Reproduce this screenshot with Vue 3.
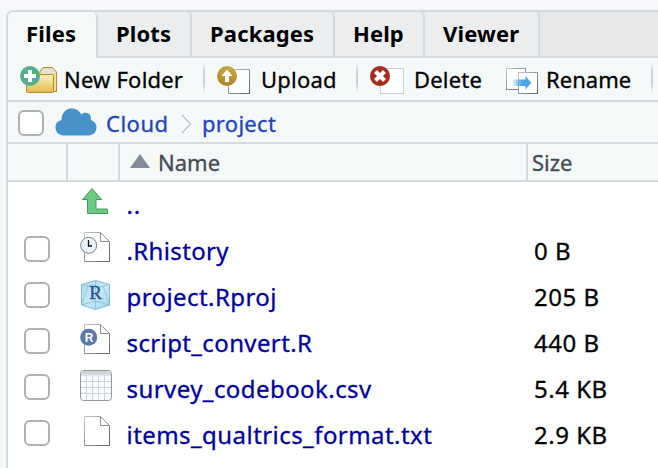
<script setup>
const tabs = [
  { name: 'Files', width: 90, ls: 0.15 },
  { name: 'Plots', width: 94, ls: 0.1 },
  { name: 'Packages', width: 143, ls: 0.15 },
  { name: 'Help', width: 90, ls: 0.1 },
  { name: 'Viewer', width: 115, ls: 0.15 },
]
const actions = [
  { name: 'New Folder', icon: 'folder', ls: 0.2 },
  { name: 'Upload', icon: 'upload', ls: 0.2 },
  { name: 'Delete', icon: 'delete', ls: 0.2 },
  { name: 'Rename', icon: 'rename', ls: 0.05 },
]
const files = [
  { name: '..', icon: 'up', size: '', ls: 0.8 },
  { name: '.Rhistory', icon: 'history', size: '0 B', ls: 0.35 },
  { name: 'project.Rproj', icon: 'project', size: '205 B', ls: 0.42 },
  { name: 'script_convert.R', icon: 'script', size: '440 B', ls: 0.38 },
  { name: 'survey_codebook.csv', icon: 'table', size: '5.4 KB', ls: 0.43 },
  { name: 'items_qualtrics_format.txt', icon: 'text', size: '2.9 KB', ls: 0.44 },
]
</script>

<template>
  <div class="page">
    <svg class="defs" width="0" height="0">
      <defs>
        <linearGradient id="gold" x2="0" y2="1"><stop stop-color="#c9a83f" /><stop offset="1" stop-color="#ad8528" /></linearGradient>
        <linearGradient id="fold" x2="0" y2="1"><stop stop-color="#fbf3b4" /><stop offset="1" stop-color="#e3b94f" /></linearGradient>
        <linearGradient id="edge" x2="1" y2="1"><stop stop-color="#c4c5c9" /><stop offset="1" stop-color="#62646c" /></linearGradient>
        <linearGradient id="blue"><stop stop-color="#4ba6e8" stop-opacity="0.1" /><stop offset=".5" stop-color="#4ba6e8" /></linearGradient>
        <linearGradient id="ice" x2="1" y2="1"><stop stop-color="#a9dcf0" /><stop offset=".5" stop-color="#c6e8f6" /><stop offset="1" stop-color="#a5d6ec" /></linearGradient>
      </defs>
    </svg>
    <div class="panel">
      <div class="tabs">
        <div v-for="(t, i) in tabs" :key="t.name" class="tab" :class="{ active: i === 0 }" :style="{ width: t.width + 'px' }">
          <span :style="{ letterSpacing: t.ls + 'px' }">{{ t.name }}</span>
        </div>
      </div>

      <div class="toolbar">
        <div v-for="a in actions" :key="a.name" class="action" :class="a.icon">
          <svg class="tool-icon" width="38" height="32" viewBox="0 0 38 32">
            <template v-if="a.icon === 'folder'">
              <path d="M20 10V7l3-3.5h9.5L36.5 8v19.5H30" fill="#f3dc98" stroke="#b28d30" />
              <path d="M20 10 23.5 4.5h8.7L34 7v3z" fill="#e1e0dc" />
              <rect x="6.5" y="10.5" width="27" height="18" rx="1" fill="url(#fold)" stroke="#b28d30" />
              <circle cx="10" cy="12" r="10" fill="#55ae8b" />
              <path d="M10 6v12M4 12h12" stroke="#fff" stroke-width="4" />
            </template>
            <template v-else-if="a.icon === 'upload'">
              <rect x="11.5" y="5.5" width="21" height="24" fill="#fff" stroke="url(#edge)" />
              <circle cx="10" cy="12" r="10" fill="url(#gold)" />
              <path d="M10 5.5 15.5 12H12v6H8v-6H4.5z" fill="#fff" />
            </template>
            <template v-else-if="a.icon === 'delete'">
              <rect x="10.5" y="4.5" width="23" height="25" fill="#fff" stroke="#cbd0dc" />
              <circle cx="10" cy="12.6" r="10" fill="#8f98a3" opacity=".35" />
              <circle cx="10" cy="12" r="10" fill="#a52c1f" />
              <path d="m5.5 7.5 9 9m0-9-9 9" stroke="#fff" stroke-width="4.2" />
            </template>
            <template v-else>
              <rect x="1.5" y="4.5" width="19" height="21" fill="#fff" stroke="url(#edge)" />
              <rect x="13.5" y="8.5" width="19" height="21" fill="#fff" stroke="url(#edge)" />
              <path d="M7.5 15.5h13v-3.5l5.8 6.7-5.8 6.8v-3.5h-13z" fill="url(#blue)" />
            </template>
          </svg>
          <span :style="{ letterSpacing: a.ls + 'px' }">{{ a.name }}</span>
          <i class="sep"></i>
        </div>
      </div>

      <div class="path">
        <i class="check"></i>
        <svg class="cloud" width="42" height="28" viewBox="0 0 42 28">
          <path d="M9 27.5C3.500 27.500.500 23.800.500 19.500c0-4 2.300-6.600 6-7.400C6.400 5.200 10.800.500 16.500.500c5 0 8.500 2.700 9.900 6.300 1-1.500 2.500-2 4.100-2 4 0 6.300 3.300 5.300 7.200 3.600 1.100 5.700 4 5.700 7.600 0 4.500-3.300 7.900-8 7.900z" fill="#4793c9" />
        </svg>
        <span class="crumb root">Cloud</span>
        <svg class="chev" width="14" height="22" viewBox="0 0 14 22"><path d="m4 2.500 8.500 8.500L4 19.500" fill="none" stroke="#fff" stroke-width="2" /><path d="m2 2 8.500 9L2 20" fill="none" stroke="#c3c8d0" stroke-width="1.700" /></svg>
        <span class="crumb leaf">project</span>
      </div>

      <div class="head">
        <div></div>
        <div></div>
        <div class="name-head">
          <svg width="20" height="14" viewBox="0 0 20 14"><path d="M10 0 20 14H0z" fill="#848b99" /></svg>
          <span>Name</span>
        </div>
        <div class="size-head">Size</div>
      </div>

      <div class="rows">
        <div v-for="f in files" :key="f.name" class="row">
          <div class="c-check"><i v-if="f.icon !== 'up'" class="check"></i></div>
          <svg class="file-icon" width="36" height="36" viewBox="0 0 36 36">
            <path v-if="f.icon === 'up'" d="M13 3.500 22.700 14.500H17v9.500h11.500v4.500H8.500v-14h-5z" fill="#6cc882" stroke="#439b58" />
            <template v-else-if="f.icon === 'project'">
              <path d="M16.500 3.500 30.500 7.500v20.500l-14 4.500-14-4.500v-20.500z" fill="url(#ice)" stroke="#7fbdd3" />
              <path d="M2.500 7.500 16.500 11l14-3.500M16.500 3.500V32M2.500 28l14-4 14 4M2.500 28 9 9M30.500 28 24 9" fill="none" stroke="#83c0d4" stroke-width=".8" />
              <text x="16.500" y="22" text-anchor="middle" class="serif-r">R</text>
            </template>
            <template v-else-if="f.icon === 'table'">
              <rect x="1.500" y="1.500" width="31" height="30" rx="3" fill="#fafcfe" stroke="#8f98a4" />
              <path d="M2 5.500V4q0-2 2.500-2h25Q32 2 32 4v1.500z" fill="#cfd4d9" />
              <path d="M2 12.500h30M2 18.500h30M2 24.500h30M7.500 6v25M13.500 6v25M19.500 6v25M25.500 6v25M2 6h30" fill="none" stroke="#ccd5df" />
            </template>
            <template v-else>
              <path d="M5.500 1.500h16l9 9v20h-25z" fill="#fff" stroke="url(#edge)" />
              <path d="M21.500 1.500v9h9" fill="none" stroke="#8d8e93" />
              <template v-if="f.icon === 'history'">
                <circle cx="9.700" cy="14.300" r="8" fill="#edf3fa" stroke="#7b818b" />
                <path d="M9.500 9v6H13" fill="none" stroke="#111" stroke-width="1.300" />
              </template>
              <template v-if="f.icon === 'script'">
                <circle cx="9.700" cy="14.300" r="8.500" fill="#5878a8" />
                <text x="10" y="18.700" text-anchor="middle" class="sans-r">R</text>
              </template>
            </template>
          </svg>
          <span class="file-name" :style="{ letterSpacing: f.ls + 'px' }">{{ f.name }}</span>
          <span class="file-size">{{ f.size }}</span>
        </div>
      </div>
    </div>
  </div>
</template>

<style>
body { margin: 0; overflow: hidden; }
</style>

<style scoped>
* { box-sizing: border-box; }
.page { width: 658px; height: 468px; padding: 10px 0 0 6px; background: #f5f7fa; overflow: hidden; font: 22px "Noto Sans", sans-serif; white-space: nowrap; color: #000; }
.page span, .size-head { -webkit-text-stroke: 0.3px currentColor; }
.page .tab span { -webkit-text-stroke: 0; }
.defs { display: block; position: absolute; }
.panel { height: 458px; border: 2px solid #d6dadc; border-right: 0; border-bottom: 0; border-top-left-radius: 7px; background: #f4f8f9; overflow: hidden; }
.tabs { display: flex; height: 46px; background: linear-gradient(#d6dadc, #d6dadc) bottom / 100% 2px no-repeat #e6e8ea; }
.tab { flex: none; height: 46px; padding-left: 18px; line-height: 42px; font-weight: 700; border: solid #d6dadc; border-width: 0 2px 2px 0; border-top-right-radius: 5px; background: #ecedef; }
.tab.active { background: #f4f8f9; border-bottom: 0; }
.toolbar { display: flex; height: 44px; border-bottom: 2px solid #d6dadc; }
.action { flex: none; display: flex; align-items: flex-start; line-height: 43px; }
.action.folder { width: 197px; padding-left: 12px; }
.action.upload { width: 153px; padding-left: 12px; }
.action.delete { width: 145px; padding-left: 12px; }
.action.rename { width: 150px; padding-left: 2px; }
.tool-icon { flex: none; margin-top: 6px; }
.action span { margin-left: 6px; }
.action.rename span { margin-left: 3px; }
.sep { margin: 5px 0 0 auto; width: 2px; height: 30px; background: linear-gradient(transparent, #cdd1d3 30%, #cdd1d3 70%, transparent); }
.action.delete .sep { display: none; }
.path { display: flex; align-items: center; height: 42px; padding: 2px 0 0 10px; border-bottom: 2px solid #d6dadc; color: #1f45b8; }
.check { display: block; flex: none; width: 26px; height: 26px; border: 2px solid #b0b0b0; border-radius: 6px; background: #fff; }
.cloud { margin: -2px 0 0 11px; }
.crumb { line-height: 38px; }
.root { width: 72px; margin-left: 9px; letter-spacing: 0.5px; }
.leaf { letter-spacing: 0.3px; }
.chev { margin: 1px 8px 0 2px; }
.head { display: grid; grid-template-columns: 60px 52px 408px 1fr; height: 38px; border-bottom: 2px solid #d6dadc; color: #434a52; line-height: 37px; }
.head > div { border-right: 2px solid #d6dadc; }
.head > .size-head { border: 0; padding-left: 4px; }
.name-head { display: flex; padding-left: 10px; }
.name-head svg { margin: 10px 8px 0 0; }
.rows { height: 300px; background: #fff; font-size: 24px; }
.row { display: grid; grid-template-columns: 71px 46px 408px 1fr; height: 46px; line-height: 46px; }
.c-check { padding: 8px 0 0 16px; }
.file-icon { margin-top: 3px; }
.file-name { color: #00009c; padding-left: 1.5px; }
.file-size { letter-spacing: 0.5px; padding-left: 1px; }
.serif-r { font: 19px "Liberation Serif", serif; fill: #304f99; stroke: #304f99; stroke-width: .4px; }
.sans-r { font: bold 12px "Liberation Sans", sans-serif; fill: #fff; }
</style>
